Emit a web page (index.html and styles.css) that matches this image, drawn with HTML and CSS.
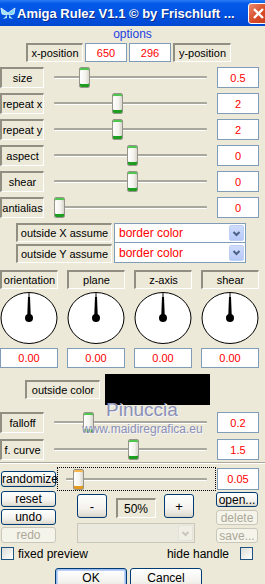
FILE: index.html
```html
<!DOCTYPE html>
<html lang="en">
<head>
    <meta charset="UTF-8">
    <meta name="viewport" content="width=device-width, initial-scale=1.0">
    <title>Amiga Rulez V1.1</title>
    <link rel="stylesheet" href="styles.css">
</head>
<body>
    <div class="titlebar">
        <svg class="app-icon" width="16" height="16" viewBox="0 0 16 16">
            <path d="M8 8 L1 3 L2 9 L7 10 Z" fill="#9fe3fb" stroke="#e8fbff" stroke-width="0.8"/>
            <path d="M8 8 L15 3 L14 9 L9 10 Z" fill="#7fd3f3" stroke="#e8fbff" stroke-width="0.8"/>
            <path d="M7 10 L3 14 L7 13 Z M9 10 L13 14 L9 13 Z" fill="#aee8fb"/>
        </svg>
        <span class="title">Amiga Rulez V1.1 © by Frischluft ...</span>
        <div class="close">
            <svg width="19" height="19" viewBox="0 0 19 19"><path d="M5 5 L14 14 M14 5 L5 14" stroke="#fff" stroke-width="2.4"/></svg>
        </div>
    </div>

    <div class="options">options</div>

    <div class="pos-row">
        <div class="sunk pos-label">x-position</div>
        <div class="edit pos-edit">650</div>
        <div class="edit pos-edit">296</div>
        <div class="sunk pos-label">y-position</div>
    </div>

    <div class="slide-row">
        <div class="sunk">size</div>
        <div class="slider"><div class="track"></div><div class="thumb" style="left:35px"></div></div>
        <div class="edit">0.5</div>
    </div>
    <div class="slide-row">
        <div class="sunk">repeat x</div>
        <div class="slider"><div class="track"></div><div class="thumb" style="left:68px"></div></div>
        <div class="edit">2</div>
    </div>
    <div class="slide-row">
        <div class="sunk">repeat y</div>
        <div class="slider"><div class="track"></div><div class="thumb" style="left:68px"></div></div>
        <div class="edit">2</div>
    </div>
    <div class="slide-row">
        <div class="sunk">aspect</div>
        <div class="slider"><div class="track"></div><div class="thumb" style="left:83px"></div></div>
        <div class="edit">0</div>
    </div>
    <div class="slide-row">
        <div class="sunk">shear</div>
        <div class="slider"><div class="track"></div><div class="thumb" style="left:83px"></div></div>
        <div class="edit">0</div>
    </div>
    <div class="slide-row">
        <div class="sunk">antialias</div>
        <div class="slider"><div class="track"></div><div class="thumb" style="left:10px"></div></div>
        <div class="edit">0</div>
    </div>

    <div class="assume">
        <div class="assume-row">
            <div class="sunk assume-label">outside X assume</div>
            <div class="combo">border color<span class="drop"><svg width="13" height="13" viewBox="0 0 13 13"><path d="M3.5 5 L6.5 8 L9.5 5" fill="none" stroke="#4d6185" stroke-width="2"/></svg></span></div>
        </div>
        <div class="assume-row">
            <div class="sunk assume-label">outside Y assume</div>
            <div class="combo second">border color<span class="drop"><svg width="13" height="13" viewBox="0 0 13 13"><path d="M3.5 5 L6.5 8 L9.5 5" fill="none" stroke="#4d6185" stroke-width="2"/></svg></span></div>
        </div>
    </div>

    <div class="dials">
        <div class="dial">
            <div class="sunk dial-label">orientation</div>
            <svg class="knob" width="58" height="52" viewBox="0 0 58 52">
                <ellipse cx="29" cy="26" rx="28" ry="25.5" fill="#fff" stroke="#000"/>
                <line x1="29" y1="1" x2="29" y2="5" stroke="#000"/>
                <path d="M28 5 L30 5 L30.8 25 L27.2 25 Z" fill="#000"/>
                <circle cx="29" cy="26" r="4" fill="#000"/>
            </svg>
            <div class="edit dial-edit">0.00</div>
        </div>
        <div class="dial">
            <div class="sunk dial-label">plane</div>
            <svg class="knob" width="58" height="52" viewBox="0 0 58 52">
                <ellipse cx="29" cy="26" rx="28" ry="25.5" fill="#fff" stroke="#000"/>
                <line x1="29" y1="1" x2="29" y2="5" stroke="#000"/>
                <path d="M28 5 L30 5 L30.8 25 L27.2 25 Z" fill="#000"/>
                <circle cx="29" cy="26" r="4" fill="#000"/>
            </svg>
            <div class="edit dial-edit">0.00</div>
        </div>
        <div class="dial">
            <div class="sunk dial-label">z-axis</div>
            <svg class="knob" width="58" height="52" viewBox="0 0 58 52">
                <ellipse cx="29" cy="26" rx="28" ry="25.5" fill="#fff" stroke="#000"/>
                <line x1="29" y1="1" x2="29" y2="5" stroke="#000"/>
                <path d="M28 5 L30 5 L30.8 25 L27.2 25 Z" fill="#000"/>
                <circle cx="29" cy="26" r="4" fill="#000"/>
            </svg>
            <div class="edit dial-edit">0.00</div>
        </div>
        <div class="dial">
            <div class="sunk dial-label">shear</div>
            <svg class="knob" width="58" height="52" viewBox="0 0 58 52">
                <ellipse cx="29" cy="26" rx="28" ry="25.5" fill="#fff" stroke="#000"/>
                <line x1="29" y1="1" x2="29" y2="5" stroke="#000"/>
                <path d="M28 5 L30 5 L30.8 25 L27.2 25 Z" fill="#000"/>
                <circle cx="29" cy="26" r="4" fill="#000"/>
            </svg>
            <div class="edit dial-edit">0.00</div>
        </div>
    </div>

    <div class="color-row">
        <div class="sunk color-label">outside color</div>
        <div class="swatch"></div>
    </div>

    <div class="slide-row falloff">
        <div class="sunk">falloff</div>
        <div class="slider"><div class="track"></div><div class="thumb" style="left:39px"></div></div>
        <div class="edit">0.2</div>
    </div>
    <div class="slide-row fcurve">
        <div class="sunk">f. curve</div>
        <div class="slider"><div class="track"></div><div class="thumb" style="left:84px"></div></div>
        <div class="edit">1.5</div>
    </div>

    <div class="separator"></div>

    <div class="random-row">
        <button class="btn random-btn">randomize</button>
        <div class="focus-slider">
            <div class="track"></div>
            <div class="thumb hot" style="left:15px"></div>
        </div>
        <div class="edit random-edit">0.05</div>
    </div>

    <div class="tools">
        <div class="tool-col left">
            <button class="btn">reset</button>
            <button class="btn">undo</button>
            <button class="btn" disabled>redo</button>
        </div>
        <div class="zoom-col">
            <div class="zoom-row">
                <button class="btn zoom-btn">-</button>
                <div class="zoom-val">50%</div>
                <button class="btn zoom-btn">+</button>
            </div>
            <div class="combo disabled"><span class="drop"><svg width="13" height="13" viewBox="0 0 13 13"><path d="M3.5 5 L6.5 8 L9.5 5" fill="none" stroke="#c9c7ba" stroke-width="2"/></svg></span></div>
        </div>
        <div class="tool-col right">
            <button class="btn">open...</button>
            <button class="btn" disabled>delete</button>
            <button class="btn" disabled>save...</button>
        </div>
    </div>

    <div class="check-row">
        <label class="check"><span class="box"></span>fixed preview</label>
        <label class="check"><span>hide handle</span><span class="box"></span></label>
    </div>

    <div class="dialog-buttons">
        <button class="btn big default">OK</button>
        <button class="btn big">Cancel</button>
    </div>

    <div class="watermark">
        <div class="wm-name">Pinuccia</div>
        <div class="wm-site">www.maidiregrafica.eu</div>
    </div>
</body>
</html>
```

FILE: styles.css
```css
html, body {
    margin: 0;
    height: 584px;
    overflow: hidden;
}

body {
    position: relative;
    width: 265px;
    background-color: #ece9d8;
    font-family: "Liberation Sans", Arial, sans-serif;
    font-size: 11px;
    color: #000;
}

/* title bar */
.titlebar {
    height: 26px;
    display: flex;
    align-items: center;
    background: linear-gradient(#2a7bf4 0%, #0459e8 14%, #0053e2 55%, #0047d0 100%);
    overflow: hidden;
}

.app-icon {
    margin-left: 0;
    flex: none;
}

.title {
    margin-left: 1px;
    color: #fff;
    font-size: 13px;
    font-weight: bold;
    white-space: nowrap;
    text-shadow: 1px 1px 0 #0a2c8c;
}

.close {
    margin-left: auto;
    margin-right: -4px;
    flex: none;
    width: 19px;
    height: 19px;
    border: 1px solid #fff;
    border-radius: 3px;
    background: linear-gradient(135deg, #ea8a6c, #d84a26 55%, #c73d1c);
}

.close svg {
    display: block;
}

/* common boxes */
.sunk {
    box-sizing: border-box;
    display: flex;
    align-items: center;
    justify-content: center;
    border-style: solid;
    border-width: 2px 1px 1px 2px;
    border-color: #918f82 #fff #fff #918f82;
    white-space: nowrap;
}

.edit {
    box-sizing: border-box;
    display: flex;
    align-items: center;
    justify-content: center;
    background-color: #fff;
    border: 1px solid #7f9db9;
    color: #f00;
}

.options {
    height: 17px;
    line-height: 17px;
    text-align: center;
    color: #1d3fe0;
    font-size: 12px;
}

.pos-row {
    display: flex;
    gap: 2px;
    height: 19px;
    margin-left: 26px;
}

.pos-label {
    width: 57px;
}

.pos-label:last-child {
    width: 58px;
}

.pos-edit {
    width: 42px;
}

/* slider rows */
.slide-row {
    display: grid;
    grid-template-columns: 44px 173px 42px;
    height: 21px;
    margin-top: 5px;
}

.slider,
.focus-slider {
    position: relative;
}

.track {
    position: absolute;
    left: 10px;
    right: 10px;
    top: 9px;
    height: 2px;
    background-color: #a9a89f;
    border-bottom: 1px solid #fff;
    border-radius: 1px;
}

.thumb {
    position: absolute;
    top: 0;
    width: 11px;
    height: 21px;
    box-sizing: border-box;
    border: 1px solid #95938a;
    border-radius: 2px;
    background: linear-gradient(90deg, #fff, #f4f3ee 60%, #d8d6cc);
    box-shadow: inset 0 2px 0 #4fc64f, inset 0 -3px 0 #1e9e1e;
}

.thumb.hot {
    box-shadow: inset 0 2px 0 #f8b94a, inset 0 -3px 0 #e49a1c;
}

/* outside assume */
.assume {
    margin-top: 5px;
    margin-left: 16px;
}

.assume-row {
    display: flex;
    gap: 2px;
    height: 20px;
}

.assume-label {
    width: 96px;
    height: 19px;
}

.assume-row:last-child .assume-label {
    margin-top: 1px;
}

.combo {
    box-sizing: border-box;
    width: 132px;
    height: 20px;
    display: flex;
    align-items: center;
    padding-left: 4px;
    background-color: #fff;
    border: 1px solid #7f9db9;
    color: #f00;
    font-size: 12px;
}

.combo.second {
    border-top: none;
}

.drop {
    margin-left: auto;
    margin-right: 1px;
    width: 15px;
    height: 16px;
    display: flex;
    align-items: center;
    justify-content: center;
    box-sizing: border-box;
    border: 1px solid #bfd0f6;
    border-radius: 2px;
    background: linear-gradient(#cfdcfd, #b6c9f7);
}

/* dials */
.dials {
    display: grid;
    grid-template-columns: repeat(4, 58px);
    column-gap: 9px;
    margin-top: 7px;
}

.dial {
    display: flex;
    flex-direction: column;
}

.dial-label {
    height: 19px;
}

.knob {
    display: block;
    margin-top: 3px;
}

.dial-edit {
    height: 20px;
    margin-top: 4px;
}

/* outside color */
.color-row {
    display: flex;
    align-items: center;
    gap: 5px;
    height: 31px;
    margin-top: 6px;
    margin-left: 25px;
}

.color-label {
    width: 75px;
    height: 19px;
}

.swatch {
    width: 105px;
    height: 31px;
    background-color: #000;
}

.slide-row.falloff {
    margin-top: 7px;
}

.slide-row.fcurve {
    margin-top: 6px;
}

.separator {
    margin-top: 2px;
    height: 0;
    border-top: 1px solid #aca899;
    border-bottom: 1px solid #fff;
}

/* buttons */
.btn {
    box-sizing: border-box;
    margin: 0;
    padding: 0;
    font-family: "Liberation Sans", Arial, sans-serif;
    font-size: 12px;
    color: #000;
    border: 1px solid #003c74;
    border-radius: 3px;
    background: linear-gradient(#fff, #f3f2ed 60%, #e3e0d6 90%, #d6d0c5);
    line-height: 1;
}

.btn:disabled {
    color: #aca899;
    border-color: #c9c7ba;
    background: #f5f4ea;
}

.random-row {
    display: grid;
    grid-template-columns: 57px 159px 43px;
    align-items: center;
    height: 24px;
    margin-top: 3px;
}

.random-btn {
    width: 55px;
    height: 16px;
    margin-left: 1px;
}

.focus-slider {
    height: 24px;
    box-sizing: border-box;
    border: 1px dotted #000;
}

.focus-slider .track {
    left: 8px;
    right: 8px;
    top: 10px;
}

.focus-slider .thumb {
    top: 1px;
}

.random-edit {
    height: 22px;
    margin-left: 1px;
}

.tools {
    display: grid;
    grid-template-columns: 55px 118px 42px;
    column-gap: 21px;
    margin-left: 1px;
    height: 52px;
}

.tool-col {
    display: flex;
    flex-direction: column;
    gap: 2px;
}

.tool-col .btn {
    height: 16px;
}

.tool-col.right {
    padding-top: 1px;
    gap: 3px;
}

.tool-col.right .btn {
    height: 15px;
}

.zoom-row {
    display: flex;
    align-items: flex-end;
    justify-content: space-between;
    width: 117px;
    margin-top: 3px;
}

.zoom-btn {
    width: 30px;
    height: 24px;
    font-size: 13px;
}

.zoom-val {
    box-sizing: border-box;
    width: 40px;
    height: 20px;
    display: flex;
    align-items: center;
    justify-content: center;
    border-style: solid;
    border-width: 2px 1px 1px 2px;
    border-color: #918f82 #fff #fff #918f82;
    font-size: 12px;
}

.combo.disabled {
    width: 118px;
    margin-top: 5px;
    background-color: #ebe9de;
    border-color: #c9c7ba;
}

.combo.disabled .drop {
    border-color: #e5e3d8;
    background: #f0efe6;
}

.check-row {
    display: flex;
    justify-content: space-between;
    align-items: center;
    height: 13px;
    margin-top: 4px;
    margin-left: 1px;
    margin-right: 12px;
    font-size: 12px;
}

.check {
    display: flex;
    align-items: center;
    gap: 4px;
}

.check .box {
    width: 13px;
    height: 13px;
    box-sizing: border-box;
    border: 1px solid #1c5180;
    background: linear-gradient(135deg, #dcdcd7, #fff);
}

.check:last-child {
    gap: 11px;
}

.dialog-buttons {
    display: flex;
    gap: 3px;
    margin-top: 8px;
    margin-left: 55px;
}

.btn.big {
    width: 72px;
    height: 23px;
    padding-top: 3px;
    display: flex;
    align-items: flex-start;
    justify-content: center;
    font-size: 12px;
}

.btn.default {
    box-shadow: inset 0 0 0 1px #9bbcf3, inset 0 0 0 2px #bcd3f7;
}

/* watermark over the preview area */
.watermark {
    position: absolute;
    left: 82px;
    top: 399px;
    width: 120px;
    text-align: center;
    color: #8b90b6;
    text-shadow: 1px 1px 0 #f5f5fa;
    pointer-events: none;
}

.wm-name {
    font-size: 19px;
    line-height: 22px;
}

.wm-site {
    font-size: 12px;
    line-height: 12px;
    margin-top: 2px;
}
```
